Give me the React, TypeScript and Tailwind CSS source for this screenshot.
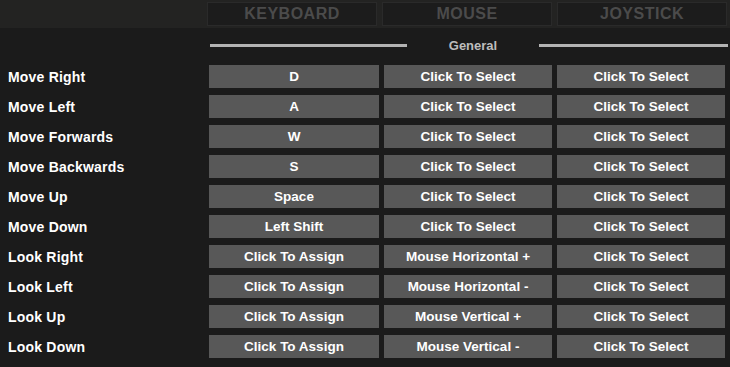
import React from "react";

const rows: [string, string, string, string][] = [
  ["Move Right", "D", "Click To Select", "Click To Select"],
  ["Move Left", "A", "Click To Select", "Click To Select"],
  ["Move Forwards", "W", "Click To Select", "Click To Select"],
  ["Move Backwards", "S", "Click To Select", "Click To Select"],
  ["Move Up", "Space", "Click To Select", "Click To Select"],
  ["Move Down", "Left Shift", "Click To Select", "Click To Select"],
  ["Look Right", "Click To Assign", "Mouse Horizontal +", "Click To Select"],
  ["Look Left", "Click To Assign", "Mouse Horizontal -", "Click To Select"],
  ["Look Up", "Click To Assign", "Mouse Vertical +", "Click To Select"],
  ["Look Down", "Click To Assign", "Mouse Vertical -", "Click To Select"],
];

const Tab = ({ label }: { label: string }) => (
  <div className="w-[170px] h-[24px] flex items-center justify-center bg-[#1c1c1c] border border-[#2a2a2a] text-[16px] font-bold text-[#4b4b4b] tracking-[0.5px]">
    {label}
  </div>
);

const Bind = ({ text, w }: { text: string; w: string }) => (
  <button className={`${w} h-[23px] pt-[1px] flex items-center justify-center bg-[#585858] text-white text-[13.5px] font-bold`}>
    {text}
  </button>
);

export default function App() {
  return (
    <div
      className="w-[730px] h-[367px] bg-[#1b1b1b] overflow-hidden"
      style={{ fontFamily: '"Liberation Sans", Arial, sans-serif' }}
    >
      {/* tabs */}
      <div className="h-[28px] bg-[#232322] flex gap-[5px] pl-[207px] pt-[2px]">
        <Tab label="KEYBOARD" />
        <Tab label="MOUSE" />
        <Tab label="JOYSTICK" />
      </div>

      {/* section title */}
      <div className="h-[37px] flex items-center pl-[210px] pb-[2px]">
        <div className="w-[197px] h-[3px] bg-[#b3b3b3]" />
        <div className="w-[132px] text-center text-[13px] font-bold text-[#bdbdbd]">General</div>
        <div className="w-[189px] h-[3px] bg-[#b3b3b3]" />
      </div>

      {/* bindings */}
      <div className="flex flex-col gap-[7px]">
        {rows.map(([name, key, mouse, joy]) => (
          <div key={name} className="flex items-center h-[23px]">
            <div className="w-[209px] pl-[8px] pt-[1px] text-white text-[14px] font-bold tracking-[0.2px]">{name}</div>
            <div className="flex gap-[5px]">
              <Bind text={key} w="w-[170px]" />
              <Bind text={mouse} w="w-[168px]" />
              <Bind text={joy} w="w-[168px]" />
            </div>
          </div>
        ))}
      </div>
    </div>
  );
}
